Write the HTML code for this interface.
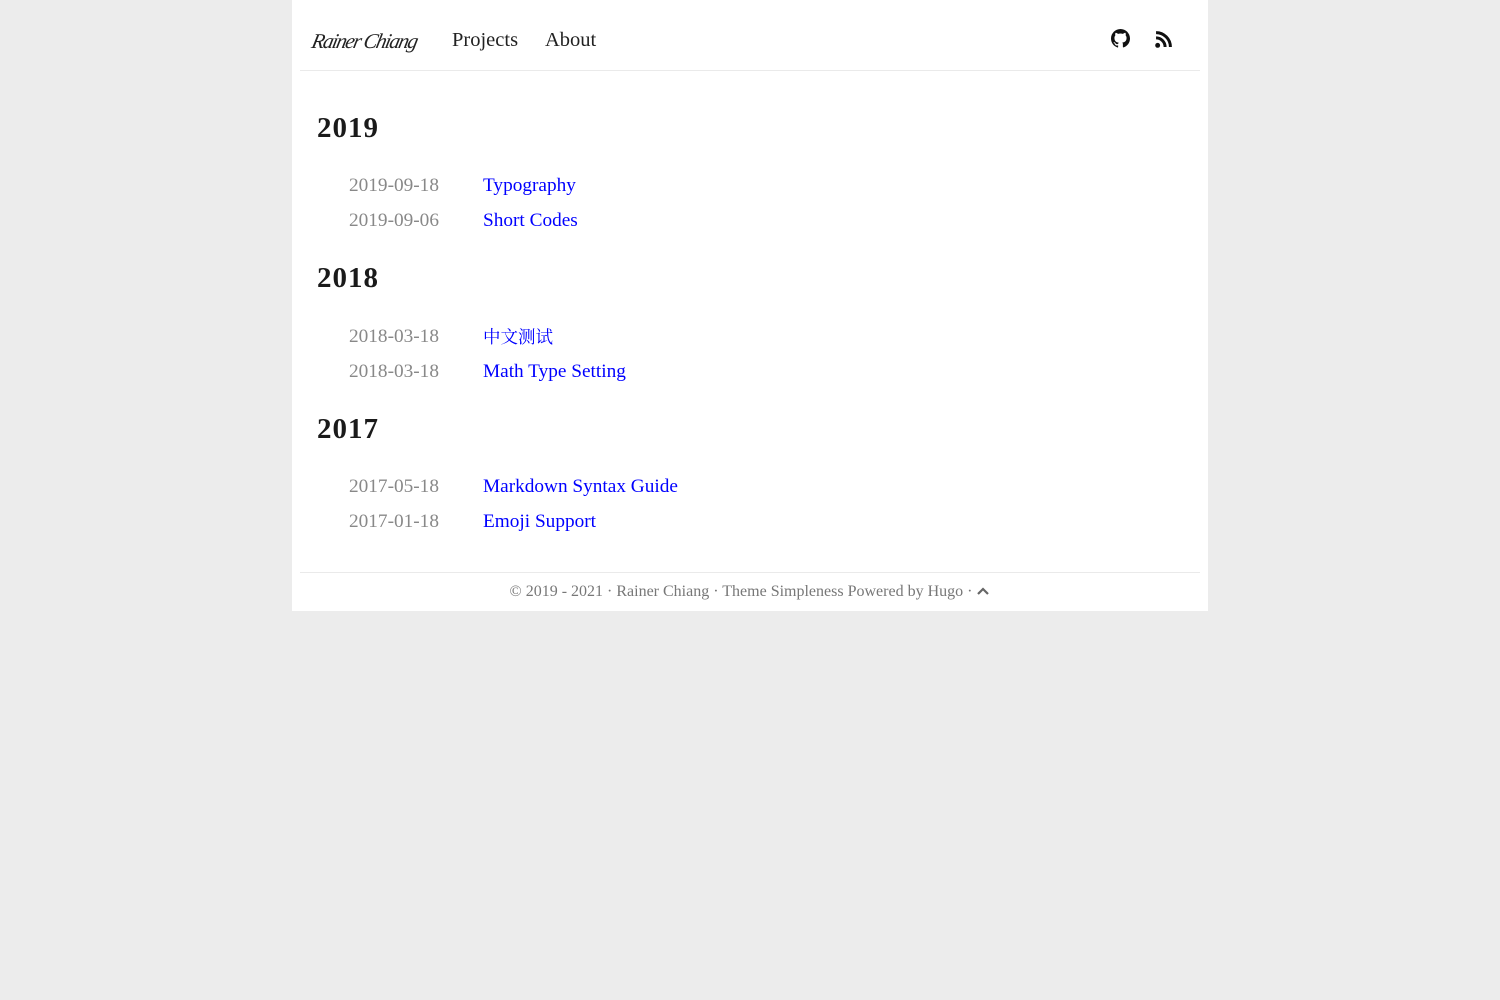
<!DOCTYPE html>
<html><head><meta charset="utf-8"><style>
body{margin:0;background:#ececec;font-family:"Liberation Serif","Noto Serif CJK SC",serif;}
.wrap{position:absolute;left:292px;top:0;width:916px;height:611px;background:#fff;}
.hr{position:absolute;left:8px;width:900px;height:1px;background:#eaeaea;}
.logo{position:absolute;left:20px;top:29px;font-family:"Liberation Serif",serif;font-style:italic;font-size:21px;color:#222;letter-spacing:-1.5px;transform:skewX(-12deg);}
.nav{position:absolute;top:29px;font-size:20.5px;color:#222;}
h2{position:absolute;left:25px;margin:0;font-size:29px;letter-spacing:1px;font-weight:bold;color:#1a1a1a;}
.d{position:absolute;left:57px;font-size:19.3px;color:#888;}
.t{position:absolute;left:191px;font-size:19.3px;color:#00f;}
.foot{position:absolute;left:0;width:916px;top:583px;text-align:center;font-size:16px;color:#777;}
</style></head><body>
<div class="wrap">
<div class="logo">Rainer Chiang</div>
<div class="nav" style="left:160px">Projects</div>
<div class="nav" style="left:253px">About</div>
<svg style="position:absolute;left:819px;top:29px" width="19" height="19" viewBox="0 0 16 16"><path fill="#111" d="M8 0C3.6 0 0 3.6 0 8c0 3.5 2.3 6.5 5.5 7.6.4.1.5-.2.5-.4v-1.4c-2.2.5-2.7-1-2.7-1-.4-.9-.9-1.2-.9-1.2-.7-.5.1-.5.1-.5.8.1 1.2.8 1.2.8.7 1.2 1.9.9 2.3.7.1-.5.3-.9.5-1.1-1.8-.2-3.6-.9-3.6-4 0-.9.3-1.6.8-2.1-.1-.2-.4-1 .1-2.1 0 0 .7-.2 2.2.8.6-.2 1.3-.3 2-.3s1.4.1 2 .3c1.5-1 2.2-.8 2.2-.8.4 1.1.2 1.9.1 2.1.5.6.8 1.3.8 2.1 0 3.1-1.9 3.7-3.6 3.9.3.3.5.8.5 1.5v2.2c0 .2.1.5.6.4C13.7 14.5 16 11.5 16 8c0-4.4-3.6-8-8-8z"/></svg>
<svg style="position:absolute;left:863px;top:31px" width="17" height="17" viewBox="0 0 16 16"><circle cx="2.5" cy="13.5" r="2.3" fill="#111"/><path d="M1 6.5a8.5 8.5 0 0 1 8.5 8.5M1 1.5A13.5 13.5 0 0 1 14.5 15" stroke="#111" stroke-width="2.8" fill="none"/></svg>
<div class="hr" style="top:70px"></div>
<h2 style="top:112px">2019</h2>
<div class="d" style="top:175px">2019-09-18</div><div class="t" style="top:175px">Typography</div>
<div class="d" style="top:210px">2019-09-06</div><div class="t" style="top:210px">Short Codes</div>
<h2 style="top:262px">2018</h2>
<div class="d" style="top:326px">2018-03-18</div><div class="t" style="top:324px;font-size:17.5px">中文测试</div>
<div class="d" style="top:361px">2018-03-18</div><div class="t" style="top:361px">Math Type Setting</div>
<h2 style="top:413px">2017</h2>
<div class="d" style="top:476px">2017-05-18</div><div class="t" style="top:476px">Markdown Syntax Guide</div>
<div class="d" style="top:511px">2017-01-18</div><div class="t" style="top:511px">Emoji Support</div>
<div class="hr" style="top:572px"></div>
<div class="foot">© 2019 - 2021 · Rainer Chiang · Theme Simpleness Powered by Hugo · <svg width="14" height="10" viewBox="0 0 14 10"><path d="M2 8l5-5 5 5" stroke="#666" stroke-width="2.2" fill="none"/></svg></div>
</div>
</body></html>
